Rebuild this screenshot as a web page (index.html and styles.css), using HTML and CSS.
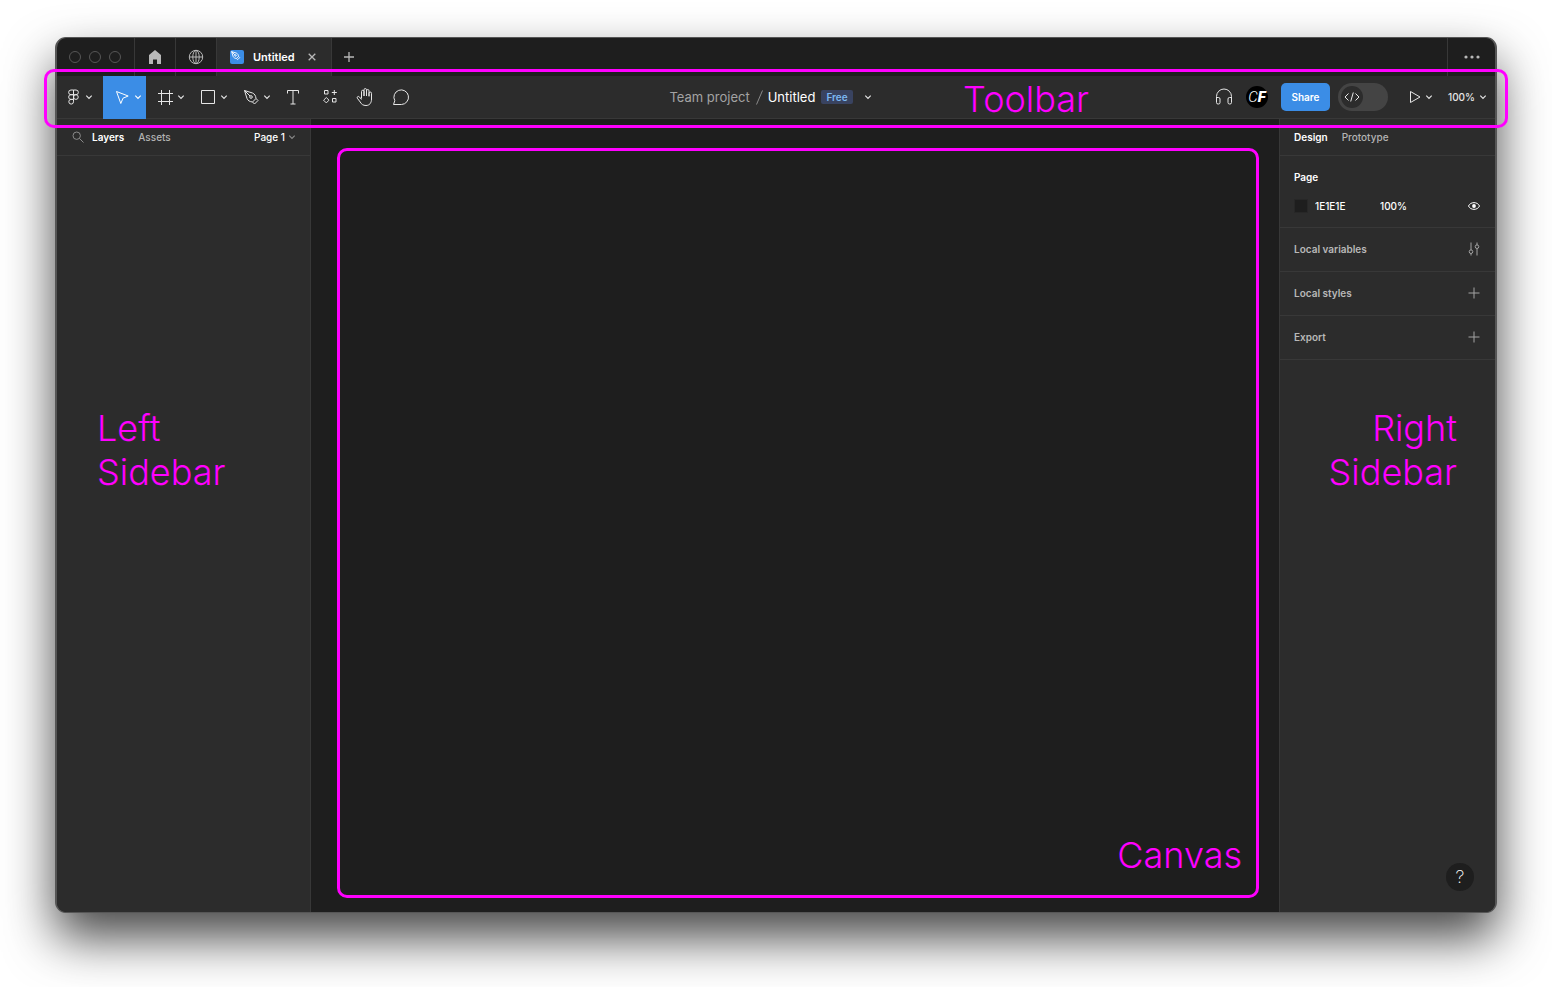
FILE: index.html
```html
<!DOCTYPE html>
<html lang="en">
<head>
  <meta charset="UTF-8" />
  <meta name="viewport" content="width=device-width, initial-scale=1.0"/>
  <title>Untitled</title>
  <link rel="stylesheet" href="styles.css">
</head>
<body>
  <svg width="0" height="0" class="defs" aria-hidden="true">
    <symbol id="chevron" viewBox="0 0 8 8"><path d="M1.300 2.700L4 5.400l2.700-2.700"/></symbol>
    <symbol id="plus" viewBox="0 0 12 12"><path d="M6 .5v11M.5 6h11"/></symbol>
    <symbol id="pen" viewBox="0 0 20 20"><path d="M3.500 3.500l8 2.500c2 .8 3.300 2.800 3.500 5.500l2 2-3.500 3.500-2-2c-2.700-.2-4.700-1.500-5.500-3.500zM3.500 3.500l5.500 5.500M15 11.500L11.500 15"/><circle cx="10" cy="10" r="1.300"/></symbol>
  </svg>

  <div class="window">
    <header class="tabbar">
      <div class="lights"><span></span><span></span><span></span></div>
      <button class="tab-icon" aria-label="Home">
        <svg width="14" height="14" viewBox="0 0 14 14"><path class="solid" d="M7 0L1 5v9h4V9.500h4V14h4V5z"/></svg>
      </button>
      <button class="tab-icon" aria-label="Community">
        <svg width="16" height="16" viewBox="0 0 16 16"><circle cx="8" cy="8" r="6.700"/><ellipse cx="8" cy="8" rx="3.200" ry="6.700"/><path d="M8 1.300v13.400M1.300 8h13.400"/></svg>
      </button>
      <div class="file-tab">
        <span class="file-icon"><svg width="12" height="12" viewBox="2 2 16 16"><use href="#pen"/></svg></span>
        <span class="file-name">Untitled</span>
        <button class="bold-icon" aria-label="Close tab"><svg width="8" height="8" viewBox="0 0 8 8"><path d="M.7.7l6.600 6.600M7.300.7L.7 7.300"/></svg></button>
      </div>
      <button class="new-tab bold-icon" aria-label="New tab"><svg width="10" height="10" viewBox="0 0 10 10"><path d="M5 0v10M0 5h10"/></svg></button>
      <button class="more" aria-label="More"><svg width="16" height="4" viewBox="0 0 16 4"><circle class="solid" cx="2" cy="2" r="1.600"/><circle class="solid" cx="8" cy="2" r="1.600"/><circle class="solid" cx="14" cy="2" r="1.600"/></svg></button>
    </header>

    <div class="toolbar">
      <div class="tools">
        <button class="tool main-menu" aria-label="Main menu">
          <svg width="20" height="20" viewBox="0 0 20 20"><path d="M10.500 3H8a2.350 2.350 0 000 4.700h2.500zM10.500 3H13a2.350 2.350 0 010 4.700h-2.500zM10.500 7.700H8a2.350 2.350 0 000 4.700h2.500zM10.500 12.400H8a2.350 2.350 0 102.500 2.350z"/><circle cx="12.900" cy="10.050" r="2.350"/></svg>
          <svg class="chev"><use href="#chevron"/></svg>
        </button>
        <button class="tool active" aria-label="Move">
          <svg width="20" height="20" viewBox="0 0 20 20"><path d="M4.500 4.500l4.300 12 2.200-5.300 5.200-2.200z"/></svg>
          <svg class="chev"><use href="#chevron"/></svg>
        </button>
        <button class="tool" aria-label="Frame">
          <svg width="20" height="20" viewBox="0 0 20 20"><path d="M6.500 3v15M14.500 3v15M3 6.500h15M3 14.500h15"/></svg>
          <svg class="chev"><use href="#chevron"/></svg>
        </button>
        <button class="tool" aria-label="Rectangle">
          <svg width="20" height="20" viewBox="0 0 20 20"><path d="M3.500 3.500h13v13h-13z"/></svg>
          <svg class="chev"><use href="#chevron"/></svg>
        </button>
        <button class="tool" aria-label="Pen">
          <svg width="20" height="20" viewBox="0 0 20 20"><use href="#pen"/></svg>
          <svg class="chev"><use href="#chevron"/></svg>
        </button>
        <button class="tool single" aria-label="Text">
          <svg width="20" height="20" viewBox="0 0 20 20"><path d="M4.500 6.500v-3h11v3M10 3.500v13.500M7.500 17h5"/></svg>
        </button>
        <button class="tool single" aria-label="Resources">
          <svg width="20" height="20" viewBox="-1 0 20 20"><path d="M4.500 3.500h3.500V7H4.500zM12.500 11.500H16V15h-3.500zM14.300 3v5M11.800 5.500h5M6.300 10.500L9 13.200l-2.700 2.700-2.700-2.700z"/></svg>
        </button>
        <button class="tool single" aria-label="Hand">
          <svg width="20" height="20" viewBox="0 0 20 20"><path d="M6.500 11.500V4.500a1.250 1.250 0 012.500 0V9M9 9V2.800a1.250 1.250 0 012.500 0V9M11.500 9V3.800a1.250 1.250 0 012.500 0V9.500M14 9V6.300a1.250 1.250 0 012.500 0V12c0 4-2 6.500-5.500 6.500-3 0-4.500-1.200-5.800-3.500L2.300 11.200c-.7-1.500 1.200-2.500 2.200-1.200l2 2.500"/></svg>
        </button>
        <button class="tool single" aria-label="Comment">
          <svg width="20" height="20" viewBox="0 0 20 20"><path d="M2.500 17.500l1.300-3.800A7.300 7.300 0 1110.500 17.500z"/></svg>
        </button>
      </div>

      <div class="doc-title">
        <span class="project">Team project</span>
        <svg width="7" height="15" viewBox="0 0 7 15"><path d="M6.500.5l-6 14"/></svg>
        <span class="name">Untitled</span>
        <span class="badge">Free</span>
        <button aria-label="File options"><svg class="chev"><use href="#chevron"/></svg></button>
      </div>

      <div class="actions">
        <button class="audio" aria-label="Start conversation">
          <svg width="20" height="20" viewBox="0 0 20 20"><path d="M2.500 12V9.500a7.500 7.500 0 0115 0V12M2.500 10.500h2a1.500 1.500 0 011.500 1.500v3.500a1.500 1.500 0 01-1.500 1.500h-.5a1.500 1.500 0 01-1.500-1.500zM17.500 10.500h-2a1.500 1.500 0 00-1.500 1.500v3.500a1.500 1.500 0 001.500 1.500h.5a1.500 1.500 0 001.500-1.500z"/></svg>
        </button>
        <span class="avatar">C<b>F</b></span>
        <button class="share">Share</button>
        <label class="dev-mode">
          <input type="checkbox" aria-label="Dev Mode">
          <span class="knob"><svg width="16" height="12" viewBox="0 0 16 12"><path d="M4.500 2.500L1 6l3.500 3.500M11.500 2.500L15 6l-3.500 3.500M9.300 1.500l-2.600 9"/></svg></span>
        </label>
        <button class="present" aria-label="Present">
          <svg width="20" height="20" viewBox="0 0 20 20"><path d="M5.500 4.500v11l9.500-5.500z"/></svg>
          <svg class="chev"><use href="#chevron"/></svg>
        </button>
        <button class="zoom">100%<svg class="chev"><use href="#chevron"/></svg></button>
      </div>
      <div class="toolbar-outline"><span class="note">Toolbar</span></div>
    </div>

    <div class="workspace">
      <aside class="sidebar left">
        <div class="panel-tabs">
          <button class="search" aria-label="Search"><svg width="12" height="12" viewBox="0 0 12 12"><circle cx="4.700" cy="4.700" r="3.700"/><path d="M7.500 7.500l4 4"/></svg></button>
          <button class="selected">Layers</button>
          <button>Assets</button>
          <button class="page-select">Page 1<svg class="chev"><use href="#chevron"/></svg></button>
        </div>
        <div class="note side-note">Left<br>Sidebar</div>
      </aside>

      <main class="canvas">
        <div class="canvas-outline"><span class="note">Canvas</span></div>
      </main>

      <aside class="sidebar right">
        <div class="panel-tabs">
          <button class="selected">Design</button>
          <button>Prototype</button>
        </div>
        <section class="page-section">
          <h2>Page</h2>
          <div class="color-row">
            <span class="swatch"></span>
            <input class="hex" type="text" value="1E1E1E" aria-label="Page color">
            <input class="opacity" type="text" value="100%" aria-label="Opacity">
            <button aria-label="Toggle visibility"><svg width="12" height="12" viewBox="0 0 12 12"><path d="M.5 6C2.500 1.500 9.500 1.500 11.500 6 9.500 10.500 2.500 10.500.5 6z"/><circle class="solid" cx="6" cy="6" r="1.900"/></svg></button>
          </div>
        </section>
        <section class="row">
          <h3>Local variables</h3>
          <button aria-label="Open variables"><svg width="12" height="14" viewBox="0 0 12 14"><path d="M3 .5v7.500M3 11.500v2M9 .5v2.500M9 6.500v7"/><circle cx="3" cy="9.700" r="1.800"/><circle cx="9" cy="4.700" r="1.800"/></svg></button>
        </section>
        <section class="row">
          <h3>Local styles</h3>
          <button aria-label="Add style"><svg width="12" height="12"><use href="#plus"/></svg></button>
        </section>
        <section class="row">
          <h3>Export</h3>
          <button aria-label="Add export"><svg width="12" height="12"><use href="#plus"/></svg></button>
        </section>
        <button class="help" aria-label="Help">?</button>
        <div class="note side-note">Right<br>Sidebar</div>
      </aside>
    </div>
  </div>
</body>
</html>
```
FILE: styles.css
```css
* { box-sizing: border-box; }

body {
  margin: 0;
  height: 100vh;
  padding: 37px 55px 74px;
  background: #fff;
  font-family: Inter, sans-serif;
  font-size: 10px;
  line-height: 16px;
  color: #fff;
  overflow: hidden;
}

button, input {
  font: inherit;
  color: inherit;
  background: none;
  border: none;
  padding: 0;
  margin: 0;
}

button {
  display: flex;
  align-items: center;
  cursor: pointer;
}

svg {
  display: block;
  flex: none;
  fill: none;
  stroke: currentColor;
}

.solid {
  fill: currentColor;
  stroke: none;
}

.bold-icon svg { stroke-width: 1.3; }

.defs { position: absolute; }

.chev {
  width: 8px;
  height: 8px;
  stroke-width: 1.2;
}

.window {
  height: 100%;
  display: flex;
  flex-direction: column;
  border: solid #565656;
  border-width: 1px 2px;
  border-radius: 11px;
  background: #1e1e1e;
  box-shadow: 0 25px 50px rgba(0,0,0,0.72);
}

/* tab bar */
.tabbar {
  display: flex;
  height: 38px;
  flex: none;
  color: #b8b8b8;
}

.lights {
  display: flex;
  align-items: center;
  gap: 8px;
  padding: 0 13px 0 12px;
}

.lights span {
  width: 12px;
  height: 12px;
  border: 1px solid #565656;
  border-radius: 50%;
}

.tab-icon {
  width: 41px;
  justify-content: center;
  border-left: 1px solid #383838;
}

.file-tab {
  display: flex;
  align-items: center;
  padding: 0 15px 0 13px;
  background: #2c2c2c;
  border: solid #383838;
  border-width: 0 1px;
}

.file-icon {
  display: flex;
  padding: 1px;
  margin-right: 9px;
  border-radius: 2px;
  background: #3b8de6;
  color: #fff;
  stroke-width: 1.5;
}

.file-name {
  margin-right: 13px;
  font-size: 11px;
  font-weight: 600;
  color: #fff;
}

.new-tab { padding: 0 12px; }

.more {
  margin-left: auto;
  width: 48px;
  justify-content: center;
  border-left: 1px solid #383838;
}

/* toolbar */
.toolbar {
  position: relative;
  z-index: 1;
  display: grid;
  grid-template-columns: 1fr auto 1fr;
  height: 43px;
  flex: none;
  background: #2c2c2c;
  border-bottom: 1px solid #383838;
  color: #e6e6e6;
}

.tools {
  display: flex;
}

.tool {
  gap: 2px;
  padding: 0 4px 0 9px;
}

.tool.main-menu { padding: 0 10px 0 6px; }
.tool.single { padding: 0 8px; }

.tool.active {
  background: #3b8de6;
  box-shadow: 0 1px #3b8de6;
  color: #fff;
}

.doc-title {
  display: flex;
  align-items: center;
  font-size: 13px;
  color: #8a8a8a;
}

.project {
  color: #a3a3a3;
  margin-right: 6px;
}

.doc-title .name {
  color: #fff;
  margin: 0 6px 0 5px;
}

.badge {
  padding: 0 5px;
  height: 14px;
  line-height: 14px;
  font-size: 10px;
  font-weight: 600;
  border-radius: 2px;
  background: #394360;
  color: #7cb8f2;
}

.doc-title button {
  padding: 0 11px;
  color: #e6e6e6;
}

.actions {
  display: flex;
  align-items: center;
  justify-content: flex-end;
  padding-right: 8px;
}

.avatar {
  width: 22px;
  height: 22px;
  margin: 0 13px 0 12px;
  border-radius: 50%;
  background: #000;
  color: #fff;
  font: italic 300 15px/22px "Roboto", sans-serif;
  text-align: center;
}

.avatar b { font-weight: 900; }

.share {
  min-width: 49px;
  height: 28px;
  justify-content: center;
  border-radius: 5px;
  background: #3b8de6;
  color: #fff;
  font-weight: 600;
}

.dev-mode {
  display: flex;
  align-items: center;
  width: 50px;
  height: 28px;
  margin: 0 17px 0 8px;
  padding: 3px;
  border-radius: 14px;
  background: #444;
}

.dev-mode input {
  appearance: none;
  width: 0;
  height: 0;
  margin: 0;
}

.knob {
  display: flex;
  align-items: center;
  justify-content: center;
  width: 22px;
  height: 22px;
  border-radius: 50%;
  background: #2c2c2c;
}

.present { margin-right: 15px; }

.zoom {
  gap: 4px;
  font-weight: 500;
}

/* panels */
.workspace {
  flex: 1;
  min-height: 0;
  display: flex;
}

.sidebar {
  position: relative;
  display: flex;
  flex-direction: column;
  background: #2c2c2c;
}

.left {
  width: 254px;
  border-right: 1px solid #383838;
  border-bottom-left-radius: 9px;
}

.right {
  width: 216px;
  border-left: 1px solid #383838;
  border-bottom-right-radius: 9px;
}

.panel-tabs {
  display: flex;
  align-items: center;
  gap: 14px;
  height: 37px;
  padding: 0 14px;
  border-bottom: 1px solid #383838;
  color: #b3b3b3;
  font-weight: 500;
}

.panel-tabs .selected {
  color: #fff;
  font-weight: 600;
}

.search {
  margin: 0 -6px 0 1px;
  color: #8a8a8a;
}

.page-select {
  gap: 3px;
  margin-left: auto;
  color: #fff;
}

.page-select .chev { color: #8a8a8a; }

.page-section {
  height: 72px;
  padding: 13px 14px 0;
  border-bottom: 1px solid #383838;
}

h2, h3 {
  margin: 0;
  font-size: 10px;
  font-weight: 600;
}

h3 { color: #b8b8b8; }

.color-row {
  display: flex;
  align-items: center;
  margin-top: 13px;
  font-weight: 500;
}

.swatch {
  width: 14px;
  height: 14px;
  margin-right: 7px;
  border: 1px solid #272727;
  background: #1e1e1e;
}

.hex { width: 65px; }
.opacity { width: 50px; }
.color-row button {
  margin-left: auto;
  padding-right: 1px;
}

.row {
  display: flex;
  align-items: center;
  justify-content: space-between;
  height: 44px;
  padding: 0 15px 1px 14px;
  border-bottom: 1px solid #383838;
  color: #a3a3a3;
}

.help {
  justify-content: center;
  align-self: flex-end;
  width: 28px;
  height: 28px;
  margin: auto 21px 21px 0;
  border-radius: 50%;
  background: #1e1e1e;
  font-size: 18px;
  font-weight: 200;
}

.canvas {
  flex: 1;
  display: flex;
  padding: 29px 20px 14px 26px;
}

/* annotations */
.note {
  font-size: 36px;
  line-height: 44px;
  font-weight: 350;
  color: #f0f;
}

.toolbar-outline {
  position: absolute;
  inset: -7px -13px -10px;
  display: flex;
  align-items: center;
  justify-content: flex-end;
  padding-right: 416px;
  border: 3px solid #f0f;
  border-radius: 10px;
  pointer-events: none;
}

.canvas-outline {
  flex: 1;
  display: flex;
  align-items: flex-end;
  justify-content: flex-end;
  padding: 0 14px 18px;
  border: 3px solid #f0f;
  border-radius: 10px;
}

.side-note {
  position: absolute;
  top: 287px;
  left: 40px;
}

.right .side-note {
  left: auto;
  right: 38px;
  text-align: right;
}
```
